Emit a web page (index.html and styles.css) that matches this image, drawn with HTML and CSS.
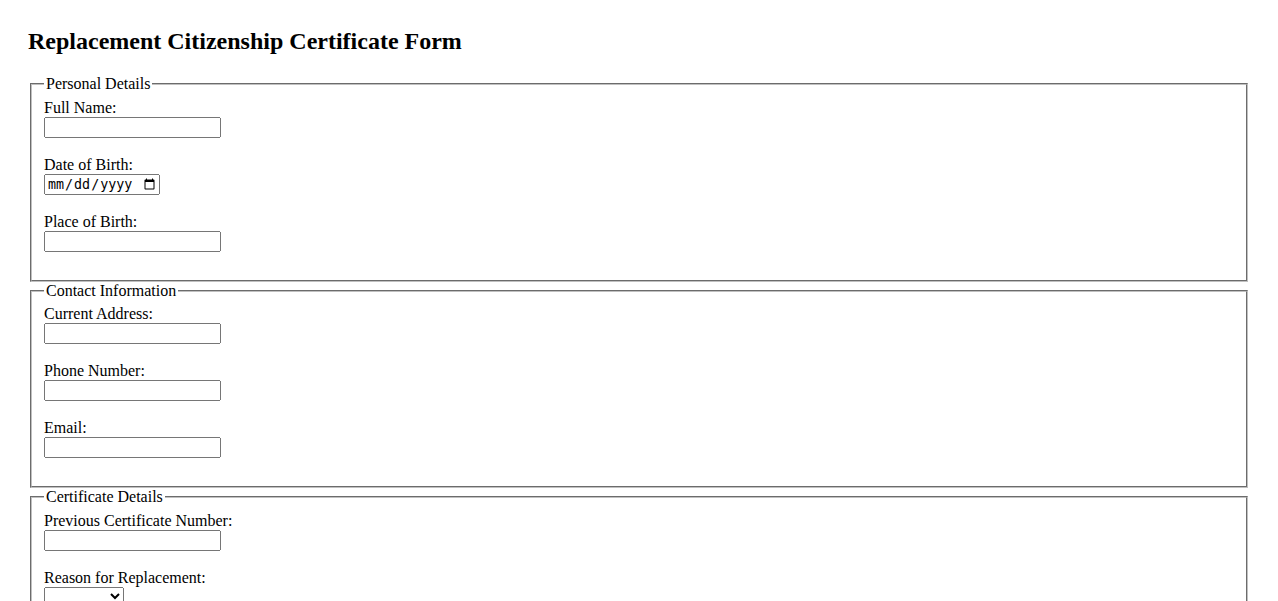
FILE: index.html
```html
<!DOCTYPE html>
<html>
<head>
<meta charset="utf-8">
<title>Replacement Citizenship Certificate Form</title>
<link rel="stylesheet" href="styles.css">
</head>
<body>
<h2 class="title">Replacement Citizenship Certificate Form</h2>
<form class="form">
<fieldset class="section">
<legend>Personal Details</legend>
<label for="fullName">Full Name:</label><br>
<input type="text" id="fullName" class="text"><br><br>
<label for="dob">Date of Birth:</label><br>
<input type="date" id="dob" class="date"><br><br>
<label for="pob">Place of Birth:</label><br>
<input type="text" id="pob" class="text"><br><br>
</fieldset>
<fieldset class="section">
<legend>Contact Information</legend>
<label for="address">Current Address:</label><br>
<input type="text" id="address" class="text"><br><br>
<label for="phone">Phone Number:</label><br>
<input type="tel" id="phone" class="text"><br><br>
<label for="email">Email:</label><br>
<input type="email" id="email" class="text"><br><br>
</fieldset>
<fieldset class="section">
<legend>Certificate Details</legend>
<label for="prevCert">Previous Certificate Number:</label><br>
<input type="text" id="prevCert" class="text"><br><br>
<label for="reason">Reason for Replacement:</label><br>
<select id="reason" class="select">
<option value=""></option>
<option value="lost">Lost</option>
<option value="stolen">Stolen</option>
<option value="damaged">Damaged</option>
</select><br><br>
</fieldset>
</form>
</body>
</html>
```
FILE: styles.css
```css
body {
  margin: 0;
  padding: 28px;
  font-family: "Liberation Serif", "Times New Roman", serif;
  font-size: 16px;
  color: #000;
  background: #fff;
}
.title {
  margin: 0 0 19.92px 0;
  font-size: 24px;
  font-weight: bold;
}
.form {
  margin: 0;
}
.section {
  margin: 0 2px;
  border: 2px groove #c0c0c0;
  padding: 0.35em 0.75em 0.625em;
}
.section legend {
  padding: 0 2px;
}
.text {
  box-sizing: border-box;
  width: 177px;
}
.date {
  box-sizing: border-box;
  width: 116px;
}
.select {
  box-sizing: border-box;
  width: 80px;
}
```
